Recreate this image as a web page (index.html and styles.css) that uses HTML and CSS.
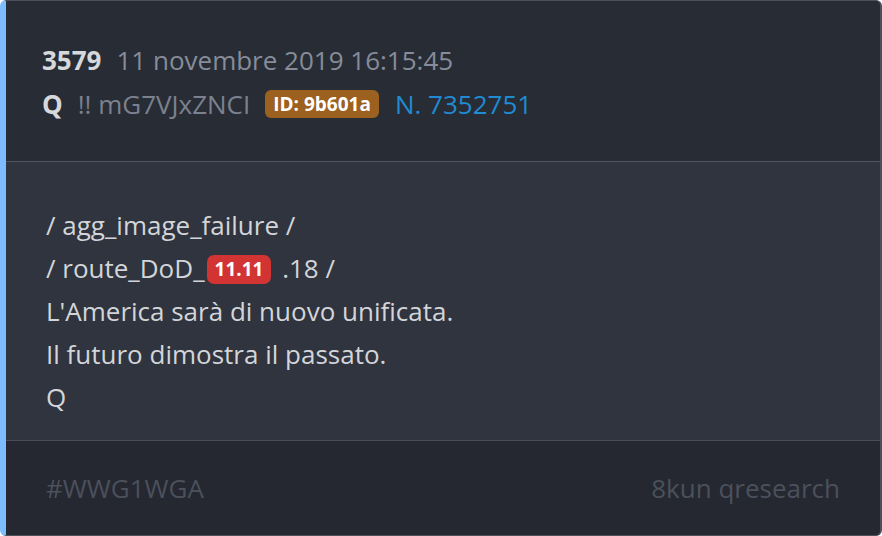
FILE: index.html
```html
<!DOCTYPE html>
<html>

<head>
    <title>Q drop 3579</title>
    <link rel="stylesheet" href="styles.css">
</head>

<body>
    <div class="post">
        <div class="post-head">
            <div class="head-line">
                <span class="num">3579</span>
                <span class="date">11 novembre 2019 16:15:45</span>
            </div>
            <div class="head-line">
                <span class="num">Q</span>
                <span class="trip">!! mG7VJxZNCI</span>
                <span class="uid">ID: 9b601a</span>
                <span class="ref">N. 7352751</span>
            </div>
        </div>

        <div class="post-body">
            <div class="text-line">/ agg_image_failure /</div>
            <div class="text-line">/ route_DoD_<span class="mark">11.11</span> .18 /</div>
            <div class="text-line">L'America sarà di nuovo unificata.</div>
            <div class="text-line">Il futuro dimostra il passato.</div>
            <div class="text-line">Q</div>
        </div>

        <div class="post-foot">
            <span>#WWG1WGA</span>
            <span>8kun qresearch</span>
        </div>
    </div>
</body>

</html>
```

FILE: styles.css
```css
html, body {
    margin: 0;
    height: 100%;
    background: #ffffff;
}

body {
    font-family: "Open Sans", "Noto Sans", sans-serif;
}

.post {
    box-sizing: border-box;
    height: 100%;
    display: flex;
    flex-direction: column;
    border: 1px solid #4b505a;
    border-right-width: 2px;
    border-left: 6px solid #7cbcff;
    border-radius: 6px;
    overflow: hidden;
    background: #2f343e;
}

.post-head {
    background: #282c35;
    padding: 37px 36px 35px;
    border-bottom: 1px solid #50555f;
}

.head-line {
    display: flex;
    align-items: center;
    height: 44px;
    font-size: 26px;
}

.num {
    font-weight: 700;
    color: #d6d8dc;
    margin-right: 15px;
}

.date {
    color: #868c9a;
}

.trip {
    color: #7b818e;
    margin-right: 15px;
}

.uid {
    background: #9c601f;
    color: #ffffff;
    font-weight: 700;
    font-size: 19px;
    line-height: 28px;
    padding: 0 8px;
    border-radius: 6px;
    margin-right: 16px;
}

.ref {
    color: #1f8bd2;
}

.post-body {
    background: #2f343e;
    padding: 42px 40px 21px;
    border-bottom: 1px solid #474c56;
}

.text-line {
    font-size: 26px;
    line-height: 43px;
    color: #d3d5d9;
}

.mark {
    display: inline-block;
    background: #d23333;
    color: #ffffff;
    font-weight: 700;
    font-size: 19px;
    line-height: 29px;
    padding: 0 8px;
    border-radius: 7px;
    margin-left: 2px;
    margin-right: 4px;
    vertical-align: 2px;
}

.post-foot {
    flex: 1;
    display: flex;
    justify-content: space-between;
    align-items: center;
    background: #252830;
    padding: 0 40px;
    font-size: 26px;
    color: #4b505c;
}
```
